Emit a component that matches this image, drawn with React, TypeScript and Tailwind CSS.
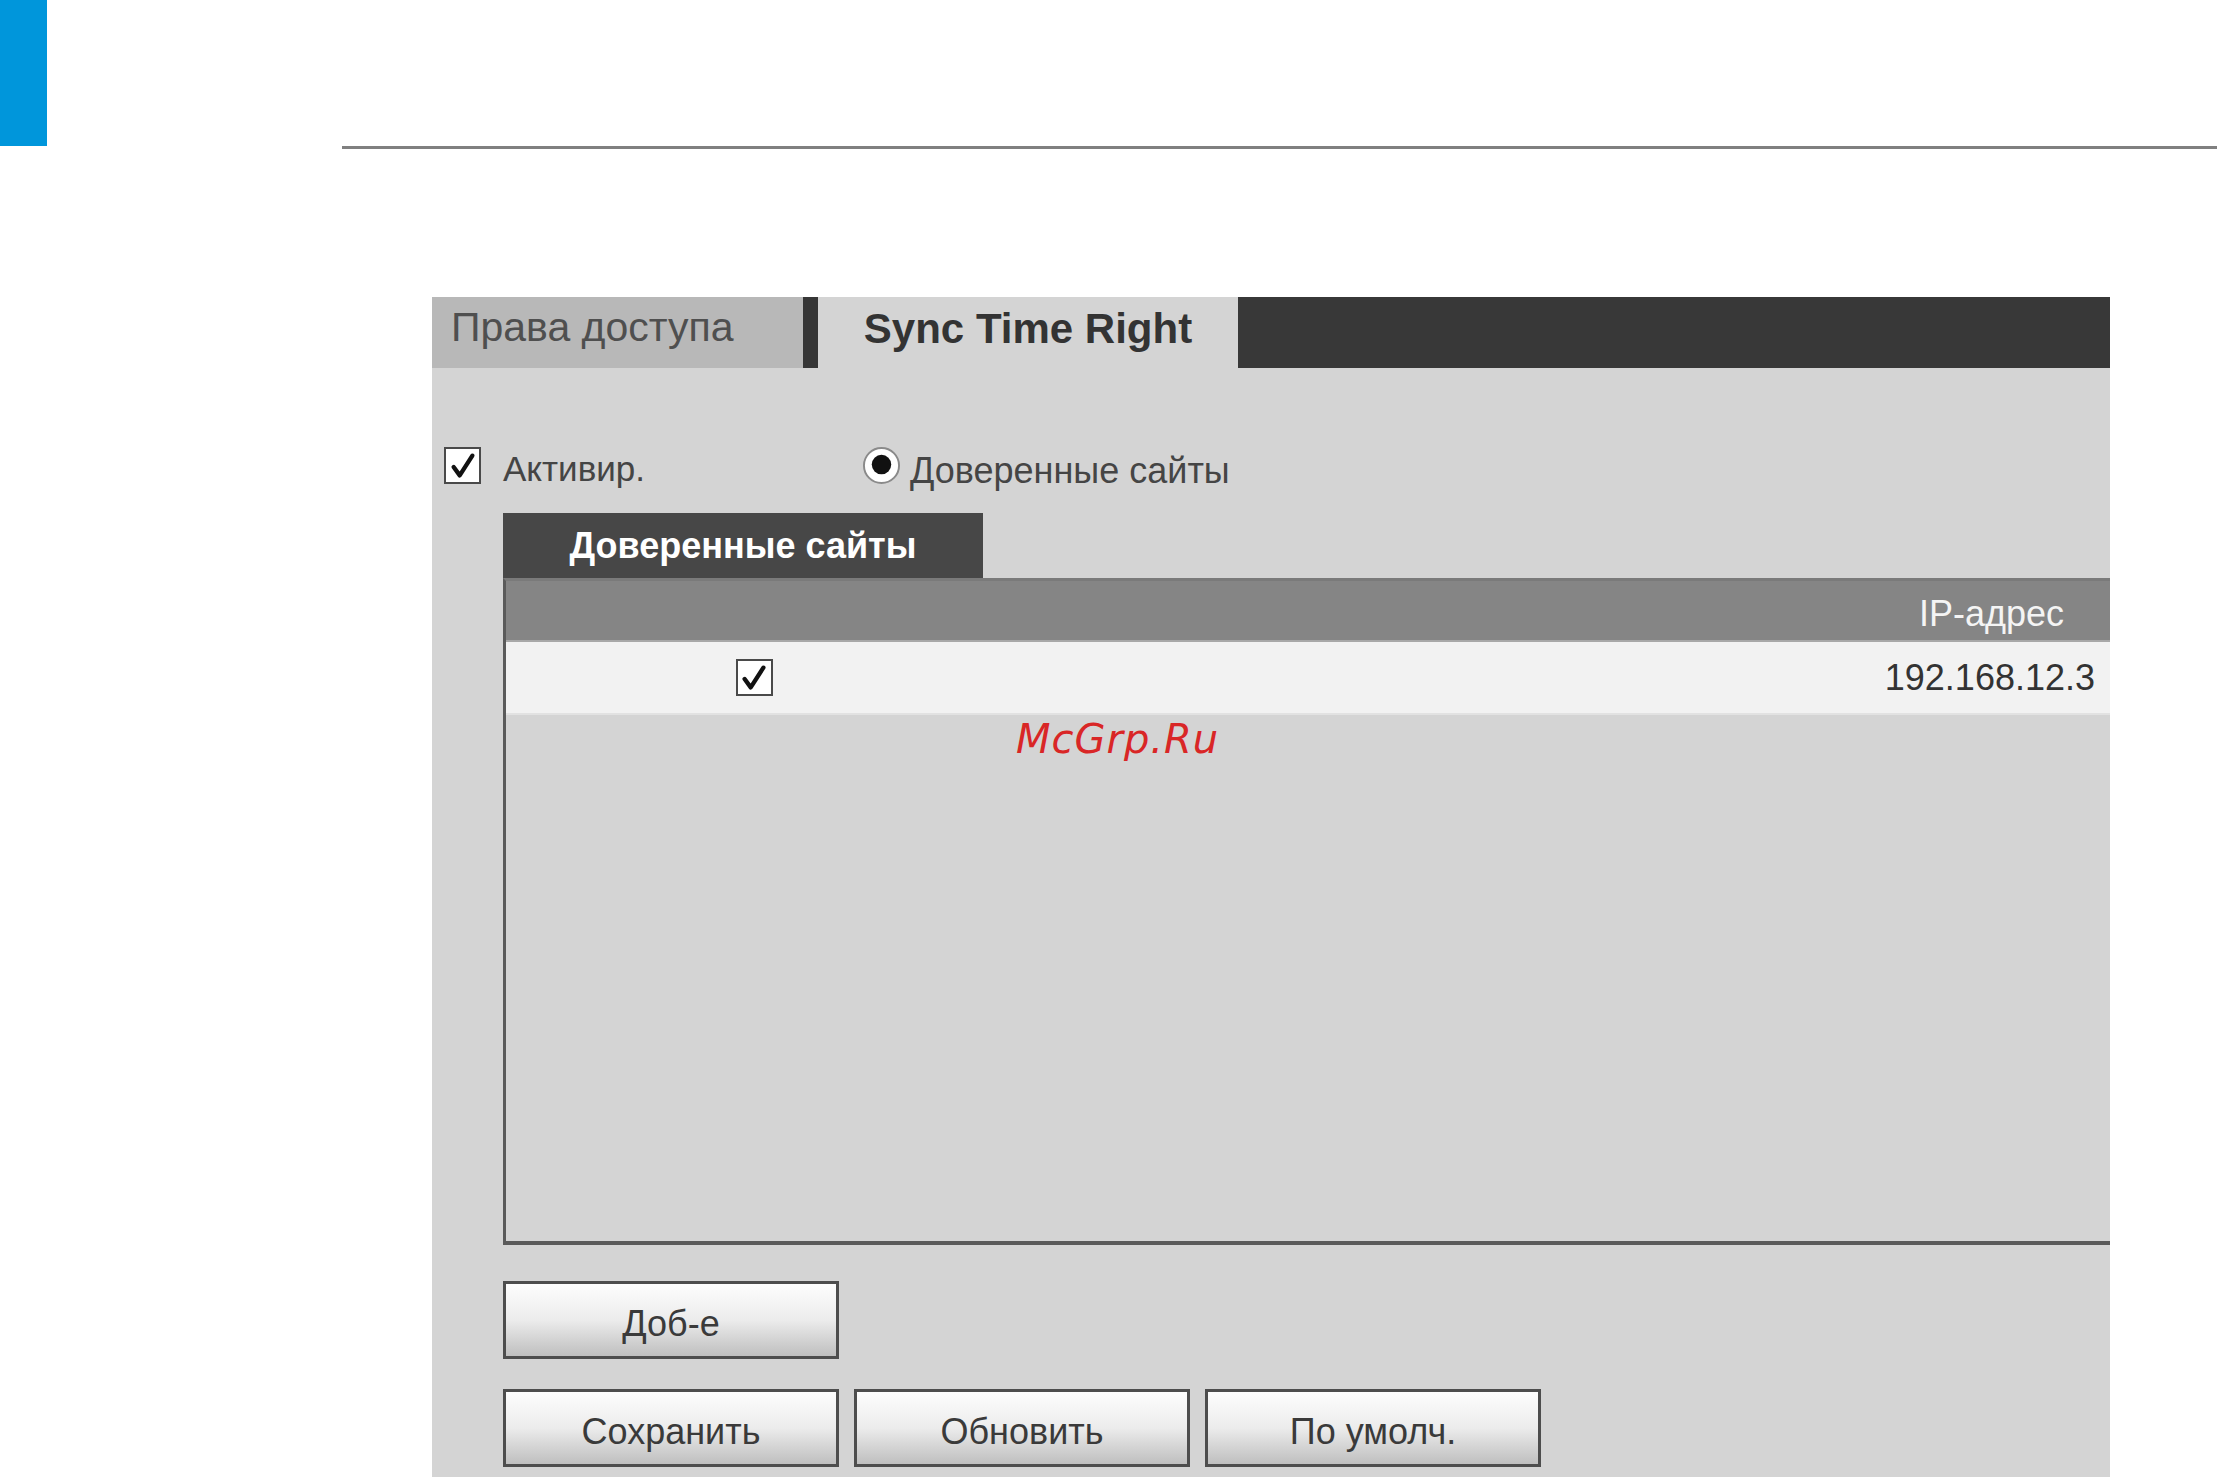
import React from "react"

const CheckBox = ({ size = 37 }: { size?: number }) => (
  <div
    className="flex shrink-0 items-center justify-center border-[2px] border-[#4a4a4a] bg-white"
    style={{ width: size, height: size }}
  >
    <svg viewBox="0 0 32 32" className="h-[30px] w-[30px]">
      <path d="M6 17 L12.5 26 L26 5" fill="none" stroke="#111" strokeWidth="4.6" strokeLinecap="round" strokeLinejoin="round" />
    </svg>
  </div>
)

const Radio = () => (
  <svg viewBox="0 0 40 40" className="h-[39px] w-[39px] shrink-0">
    <circle cx="20" cy="20" r="18" fill="#fff" stroke="#8a8a8a" strokeWidth="2" />
    <circle cx="20" cy="19" r="10" fill="#111" />
  </svg>
)

const Button = ({ label }: { label: string }) => (
  <button className="flex h-[78px] w-[336px] items-center justify-center border-[3px] border-[#4d4d4d] bg-linear-to-b from-[#fdfdfd] via-[#ececec] to-[#bfbfbf] pt-[8px] text-[36px] text-[#3a3a3a]">
    {label}
  </button>
)

export default function App() {
  return (
    <div className="relative h-[1477px] w-[2217px] overflow-hidden bg-white font-['Liberation_Sans',Arial,sans-serif]">
      {/* header strip */}
      <div className="h-[146px]">
        <div className="h-[146px] w-[47px] bg-[#0096db]" />
      </div>
      <div className="ml-[342px] h-[3px] bg-[#808080]" />

      {/* settings panel */}
      <div className="relative ml-[432px] mt-[148px] h-[1180px] w-[1678px] overflow-hidden bg-[#d4d4d4]">
        <div className="flex h-[71px]">
          <div className="flex w-[371px] items-center bg-[#b8b8b8] pb-[9px] pl-[19px] text-[41px] text-[#4f4f4f]">
            Права доступа
          </div>
          <div className="w-[15px] bg-[#363636]" />
          <div className="flex w-[420px] items-center justify-center bg-[#d4d4d4] pb-[9px] text-[42px] font-bold text-[#333]">
            Sync Time Right
          </div>
          <div className="flex-1 bg-[#383838]" />
        </div>

        <div className="pt-[78px]">
          <div className="flex h-[39px] items-center">
            <div className="flex w-[430px] items-center">
              <div className="ml-[12px]">
                <CheckBox />
              </div>
              <span className="ml-[22px] mt-[8px] text-[35px] text-[#454545]">Активир.</span>
            </div>
            <Radio />
            <span className="ml-[9px] mt-[10px] text-[36px] text-[#454545]">Доверенные сайты</span>
          </div>

          <div className="ml-[71px] mt-[28px] flex h-[65px] w-[480px] items-center justify-center bg-[#474747] text-[36px] font-bold text-white">
            Доверенные сайты
          </div>

          <div className="ml-[71px] h-[667px] border-b-[4px] border-l-[3px] border-t-[3px] border-b-[#5a5a5a] border-l-[#5a5a5a] border-t-[#7a7a7a]">
            <div className="flex h-[61px] border-b-[2px] border-[#a8a8a8] bg-[#858585]">
              <div className="w-[496px]" />
              <div className="flex flex-1 items-center justify-end pr-[46px] pt-[6px] text-[36px] text-[#f4f4f4]">
                IP-адрес
              </div>
            </div>
            <div className="flex h-[73px] border-b-[2px] border-[#e2e2e2] bg-[#f2f2f2]">
              <div className="flex w-[496px] items-center justify-center">
                <CheckBox />
              </div>
              <div className="flex flex-1 items-center justify-end pr-[15px] text-[36px] text-[#333]">
                192.168.12.3
              </div>
            </div>
          </div>

          <div className="ml-[71px] mt-[36px]">
            <Button label="Доб-е" />
          </div>
          <div className="ml-[71px] mt-[30px] flex gap-[15px]">
            <Button label="Сохранить" />
            <Button label="Обновить" />
            <Button label="По умолч." />
          </div>
        </div>

        {/* watermark */}
        <div className="absolute left-[584px] top-[422px] text-[40px] leading-none italic tracking-[1px] text-[#d92626] font-['DejaVu_Sans',sans-serif]">
          McGrp.Ru
        </div>
      </div>
    </div>
  )
}
